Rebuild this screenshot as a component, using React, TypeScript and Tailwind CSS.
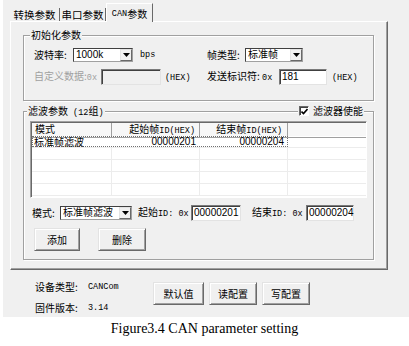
import React from 'react'

const cjk = "font-[family-name:'Noto_Sans_CJK_SC',sans-serif]"
const mono = "font-[family-name:'Liberation_Mono',monospace]"
const sans = "font-[family-name:'Liberation_Sans','Noto_Sans_CJK_SC',sans-serif]"

function Arrow() {
  return (
    <svg width="7" height="4" viewBox="0 0 7 4">
      <path d="M0 0h7L3.5 4z" fill="#000" />
    </svg>
  )
}

function Select({ value, className }: { value: string; className: string }) {
  return (
    <div
      className={`flex h-[14px] border border-[#a0a0a0] border-t-[#404040] border-l-[#404040] bg-white ${className}`}
    >
      <span className={`flex-1 truncate pl-[2px] text-[10px] leading-[12px] ${sans}`}>{value}</span>
      <span className="flex w-[12px] items-center justify-center border border-t-[#e3e3e3] border-l-[#e3e3e3] border-r-[#696969] border-b-[#696969] bg-[#f0f0f0]">
        <Arrow />
      </span>
    </div>
  )
}

function Field({ value, className, disabled }: { value?: string; className: string; disabled?: boolean }) {
  return (
    <div
      className={`h-[16px] border border-t-[#7a7a7a] border-l-[#7a7a7a] border-r-[#e3e3e3] border-b-[#e3e3e3] pl-[2px] text-[10px] leading-[13px] shadow-[inset_1px_1px_0_#404040] ${sans} ${disabled ? 'bg-[#f0f0f0]' : 'bg-white'} ${className}`}
    >
      {value}
    </div>
  )
}

function Btn({ label, className }: { label: string; className: string }) {
  return (
    <button
      className={`flex h-[23px] items-center justify-center border border-t-[#e3e3e3] border-l-[#e3e3e3] border-r-[#696969] border-b-[#696969] text-[10px] leading-none shadow-[inset_1px_1px_0_#fff,inset_-1px_-1px_0_#a0a0a0] ${className}`}
    >
      {label}
    </button>
  )
}

function Hex() {
  return <span className={`text-[8.5px] ${mono}`}>(HEX)</span>
}

export default function App() {
  const rows = [0, 1, 2, 3, 4]

  return (
    <div className={`h-[346px] w-[409px] overflow-hidden bg-white text-black ${cjk}`}>
      <div className="ml-[3px] h-[317px] w-[406px] bg-[#f0f0f0] pt-[3px]">
        {/* Tabs */}
        <div className="ml-[7px] flex h-[18px] items-end text-[10.5px] leading-[12px]">
          <div className="flex h-[13px] w-[50px] items-center justify-center border-r border-[#696969] pt-[1px]">
            转换参数
          </div>
          <div className="flex h-[13px] w-[46px] items-center justify-center border-r border-[#696969] pt-[1px]">
            串口参数
          </div>
          <div className="relative z-10 -mb-px flex h-[19px] w-[47px] justify-center border-t border-l border-r border-t-white border-l-white border-r-[#696969] bg-[#f0f0f0] pt-[4px] text-[10px]">
            <span className={`text-[8.5px] ${mono}`}>CAN</span>参数
          </div>
        </div>

        {/* Tab panel */}
        <div className="ml-[7px] h-[249px] w-[378px] border border-t-white border-l-white border-r-[#696969] border-b-[#696969] pt-[13px] pl-[12px] shadow-[inset_-1px_-1px_0_#a0a0a0]">
          {/* 初始化参数 */}
          <div className="relative h-[66px] w-[351px] border border-[#a0a0a0] pt-[12px] pl-[10px] text-[10px] shadow-[1px_1px_0_#fff,inset_1px_1px_0_#fff]">
            <span className="absolute -top-[7px] left-[6px] bg-[#f0f0f0] px-px leading-[12px]">初始化参数</span>
            <div className="flex h-[14px] items-center leading-[12px]">
              <div className="flex w-[173px] items-center">
                <span className="w-[39px]">波特率:</span>
                <Select value="1000k" className="w-[60px]" />
                <span className={`ml-[7px] text-[8.5px] ${mono}`}>bps</span>
              </div>
              <div className="flex items-center">
                <span className="w-[38px]">帧类型:</span>
                <Select value="标准帧" className="w-[58px]" />
              </div>
            </div>
            <div className="mt-[7px] flex h-[16px] items-center leading-[12px]">
              <div className="flex w-[173px] items-center">
                <span className="w-[67px] text-[#a0a0a0]">
                  自定义数据:<span className={`text-[8.5px] ${mono}`}>0x</span>
                </span>
                <Field className="w-[60px]" disabled />
                <span className="ml-[4px]">
                  <Hex />
                </span>
              </div>
              <div className="flex items-center">
                <span className="w-[72px]">
                  发送标识符: <span className={`text-[8.5px] ${mono}`}>0x</span>
                </span>
                <Field value="181" className="w-[48px]" />
                <span className="ml-[5px]">
                  <Hex />
                </span>
              </div>
            </div>
          </div>

          {/* 滤波参数 */}
          <div className="relative mt-[10px] h-[149px] w-[351px] border border-[#a0a0a0] pt-[9px] pl-[6px] text-[10px] shadow-[1px_1px_0_#fff,inset_1px_1px_0_#fff]">
            <span className="absolute -top-[7px] left-[3px] bg-[#f0f0f0] px-px leading-[12px]">
              滤波参数<span className={`text-[8.5px] ${mono}`}> (12</span>组<span className={`text-[8.5px] ${mono}`}>)</span>
            </span>
            <span className="absolute -top-[7px] left-[274px] flex items-center gap-[4px] bg-[#f0f0f0] px-px leading-[12px]">
              <span className="flex h-[10px] w-[10px] items-center justify-center border border-t-[#696969] border-l-[#696969] border-r-white border-b-white bg-white shadow-[inset_1px_1px_0_#404040]">
                <svg width="7" height="7" viewBox="0 0 7 7">
                  <path d="M0.5 3.5l2 2l4-4.5" fill="none" stroke="#000" strokeWidth="1.6" />
                </svg>
              </span>
              <span className="text-[10px]">滤波器使能</span>
            </span>

            {/* List view */}
            <div className="h-[77px] w-[337px] overflow-hidden border border-t-[#a0a0a0] border-l-[#a0a0a0] border-r-white border-b-white bg-white shadow-[inset_1px_1px_0_#696969]">
              <div className="ml-px mt-px grid h-[13px] grid-cols-[80px_88px_88px_1fr] bg-[#f7f7f7] text-[10px] leading-[12px]">
                <div className="border-r border-b border-[#a0a0a0] pl-[3px]">模式</div>
                <div className="border-r border-b border-[#a0a0a0] pr-[4px] text-right">
                  起始帧<span className={`text-[8.5px] ${mono}`}>ID(HEX)</span>
                </div>
                <div className="border-r border-b border-[#a0a0a0] pr-[5px] text-right">
                  结束帧<span className={`text-[8.5px] ${mono}`}>ID(HEX)</span>
                </div>
                <div className="border-b border-[#a0a0a0]" />
              </div>
              {rows.map((r) => (
                <div key={r} className="ml-px flex h-[12px] border-b border-[#ececec] text-[10px] leading-[10px]">
                  {r === 0 ? (
                    <div className="flex w-[256px] border border-dotted border-[#707070]">
                      <div className="w-[79px] pl-px">标准帧滤波</div>
                      <div className={`w-[88px] pr-[4px] text-right text-[10px] ${sans}`}>00000201</div>
                      <div className={`w-[87px] pr-[3px] text-right text-[10px] ${sans}`}>00000204</div>
                    </div>
                  ) : (
                    <div className="flex w-[256px]">
                      <div className="w-[80px] border-r border-[#ececec]" />
                      <div className="w-[88px] border-r border-[#ececec]" />
                      <div className="w-[88px] border-r border-[#ececec]" />
                    </div>
                  )}
                  <div className="flex-1" />
                </div>
              ))}
            </div>

            {/* 编辑行 */}
            <div className="mt-[7px] flex h-[16px] items-center leading-[12px]">
              <span className="ml-[2px] w-[28px]">模式:</span>
              <Select value="标准帧滤波" className="w-[72px]" />
              <span className="ml-[6px] w-[53px]">
                起始<span className={`text-[8.5px] ${mono}`}>ID: 0x</span>
              </span>
              <Field value="00000201" className="w-[50px]" />
              <span className="ml-[11px] w-[54px]">
                结束<span className={`text-[8.5px] ${mono}`}>ID: 0x</span>
              </span>
              <Field value="00000204" className="w-[48px]" />
            </div>
            <div className="mt-[7px] flex">
              <Btn label="添加" className="ml-[4px] w-[46px]" />
              <Btn label="删除" className="ml-[18px] w-[48px]" />
            </div>
          </div>
        </div>

        {/* 底部信息 */}
        <div className="flex pl-[32px] text-[10px]">
          <div className="w-[118px] pt-[11px] leading-[12px]">
            <div className="flex items-center">
              <span className="w-[53px]">设备类型:</span>
              <span className={`text-[8.5px] ${mono}`}>CANCom</span>
            </div>
            <div className="mt-[9px] flex items-center">
              <span className="w-[53px]">固件版本:</span>
              <span className={`text-[8.5px] ${mono}`}>3.14</span>
            </div>
          </div>
          <div className="flex gap-[5px] pt-[12px]">
            <Btn label="默认值" className="w-[51px]" />
            <Btn label="读配置" className="w-[48px]" />
            <Btn label="写配置" className="w-[48px]" />
          </div>
        </div>
      </div>
      <p className="mt-[4px] text-center font-['Liberation_Serif',serif] text-[14px] leading-[16px]">
        Figure3.4 CAN parameter setting
      </p>
    </div>
  )
}
